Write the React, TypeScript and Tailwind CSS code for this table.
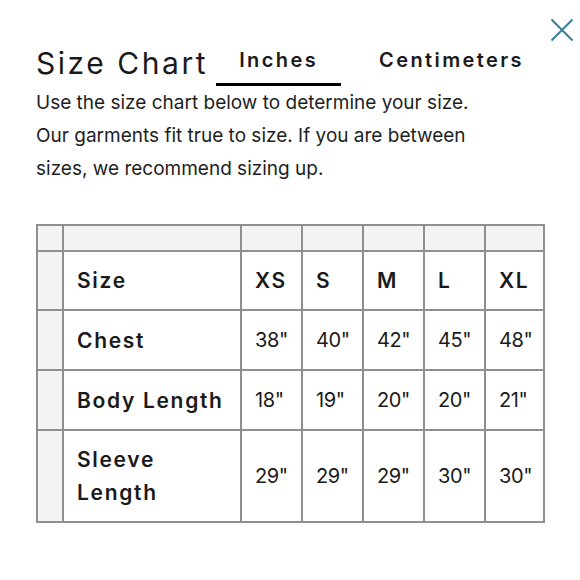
const sizes = ["XS", "S", "M", "L", "XL"];

const rows = [
  { label: "Chest", values: ['38"', '40"', '42"', '45"', '48"'], h: "h-[60px]" },
  { label: "Body Length", values: ['18"', '19"', '20"', '20"', '21"'], h: "h-[60px]" },
  { label: "Sleeve Length", values: ['29"', '29"', '29"', '30"', '30"'], h: "h-[92px]" },
];

function CloseIcon() {
  return (
    <svg viewBox="0 0 24 24" aria-hidden="true" className="w-6 h-6">
      <path d="M1.5 1.5l21 21M22.5 1.5l-21 21" stroke="#3a7d97" strokeWidth="2" fill="none" />
    </svg>
  );
}

export default function App() {
  const cell = "border-2 border-[#8f8f8f] px-[13px] align-middle";

  return (
    <div className="relative w-[580px] h-[580px] bg-white text-[#1a1a1a] font-['Inter','Liberation_Sans',Arial,sans-serif] pl-[36px] pt-[45px]">
      <button className="absolute top-[18px] left-[550px]" aria-label="Close">
        <CloseIcon />
      </button>

      <div className="flex items-start">
        <h1 className="text-[30px] leading-[36px] tracking-[0.085em] font-normal">Size Chart</h1>
        <div className="flex ml-[8px] mt-[3px] gap-[15px]">
          <div className="px-[23px] pb-[11px] border-b-[3px] border-black text-[20px] leading-[24px] font-semibold tracking-[0.12em]">
            Inches
          </div>
          <div className="px-[23px] pb-[11px] border-b-[3px] border-transparent text-[20px] leading-[24px] font-semibold tracking-[0.12em]">
            Centimeters
          </div>
        </div>
      </div>

      <p className="text-[19px] leading-[33px] text-[#1e1e1e] w-[530px]">
        Use the size chart below to determine your size.
        <br />
        Our garments fit true to size. If you are between
        <br />
        sizes, we recommend sizing up.
      </p>

      <table className="mt-[39px] w-[507px] table-fixed border-collapse text-[21px]">
        <thead>
          <tr className="h-[26px] bg-[#f3f3f3]">
            <th className="w-[26px] border-2 border-[#8f8f8f]" />
            <th className="w-[178px] border-2 border-[#8f8f8f]" />
            <th className="w-[61px] border-2 border-[#8f8f8f]" />
            <th className="w-[61px] border-2 border-[#8f8f8f]" />
            <th className="w-[61px] border-2 border-[#8f8f8f]" />
            <th className="w-[61px] border-2 border-[#8f8f8f]" />
            <th className="w-[59px] border-2 border-[#8f8f8f]" />
          </tr>
        </thead>
        <tbody>
          <tr className="h-[59px]">
            <td className="border-2 border-[#8f8f8f] bg-[#f3f3f3]" />
            <td className={`${cell} font-semibold tracking-[0.08em] text-left`}>Size</td>
            {sizes.map((s) => (
              <td key={s} className={`${cell} font-semibold tracking-[0.08em] text-left`}>
                {s}
              </td>
            ))}
          </tr>
          {rows.map((r) => (
            <tr key={r.label} className={r.h}>
              <td className="border-2 border-[#8f8f8f] bg-[#f3f3f3]" />
              <td className={`${cell} font-semibold tracking-[0.08em] leading-[33px] pr-[8px]`}>{r.label}</td>
              {r.values.map((v, i) => (
                <td key={i} className={`${cell} text-[20px] tracking-[-0.02em]`}>
                  {v}
                </td>
              ))}
            </tr>
          ))}
        </tbody>
      </table>
    </div>
  );
}
